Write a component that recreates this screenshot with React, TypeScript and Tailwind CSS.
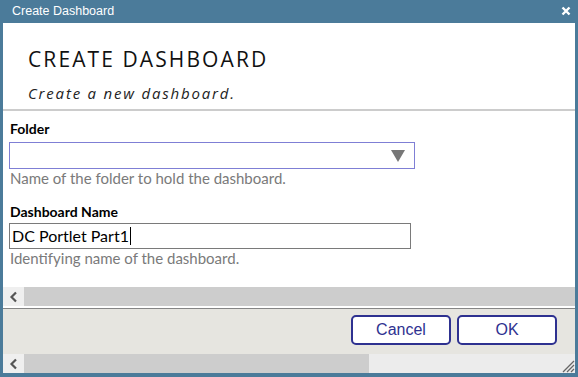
import React from "react";

function Chevron() {
  return (
    <svg width="10" height="12" viewBox="0 0 10 12">
      <path d="M7 1.5 L2.5 6 L7 10.5" fill="none" stroke="#555" strokeWidth="2.2" />
    </svg>
  );
}

function ScrollBar({ thumb }: { thumb?: number }) {
  return (
    <div className="flex h-[19px] bg-[#ececec]">
      <div className="w-[21px] flex items-center justify-center bg-[#efefef]">
        <Chevron />
      </div>
      {thumb ? (
        <div className="bg-[#cdcdcd]" style={{ width: thumb }} />
      ) : (
        <div className="flex-1 bg-[#cdcdcd]" />
      )}
      {thumb ? (
        <div className="flex-1 flex items-end justify-end">
          <svg width="14" height="14" viewBox="0 0 14 14">
            <path d="M13 2 L2 13 M13 6 L6 13 M13 10 L10 13" stroke="#666" strokeWidth="1.3" />
          </svg>
        </div>
      ) : null}
    </div>
  );
}

export default function App() {
  return (
    <div className="w-[578px] h-[377px] bg-[#4b7b9a] flex flex-col px-[3px] pb-[4px] overflow-hidden">
      {/* barra de título */}
      <div className="h-[23px] flex items-center justify-between pl-[9px] pr-[4px]">
        <span className="text-white text-[12.5px] font-['Liberation_Sans',sans-serif]">Create Dashboard</span>
        <svg width="10" height="10" viewBox="0 0 10 10" className="mb-[1px]">
          <path d="M1.5 1.5 L8.5 8.5 M8.5 1.5 L1.5 8.5" stroke="#fff" strokeWidth="2.4" />
        </svg>
      </div>

      <div className="flex-1 bg-white flex flex-col">
        {/* cabeçalho */}
        <div className="h-[88px] shrink-0 pl-[25px] pt-[23px] border-b-2 border-[#cccccc]">
          <h1 className="text-[21px] leading-[26px] font-medium tracking-[0.1em] text-[#111] font-['Open_Sans',sans-serif]">
            CREATE DASHBOARD
          </h1>
          <p className="mt-[11px] text-[15px] leading-[20px] italic tracking-[0.12em] text-[#222] font-['Open_Sans',sans-serif]">
            Create a new dashboard.
          </p>
        </div>

        {/* formulário */}
        <div className="flex-1 pl-[6px] pt-[10px] font-['Lato',sans-serif]">
          <label className="block text-[14px] leading-[16px] font-bold text-black pl-[1px]">Folder</label>
          <div className="mt-[5px] w-[406px] h-[27px] border border-[#7f7fd5] flex items-center justify-end pr-[9px]">
            <svg width="14" height="12" viewBox="0 0 14 12">
              <path d="M0 0 H14 L7 12 Z" fill="#777" />
            </svg>
          </div>
          <p className="text-[15px] leading-[19px] text-[#7a7a7a] pl-[1px]">Name of the folder to hold the dashboard.</p>

          <label className="block mt-[16px] text-[14px] leading-[16px] font-bold text-black pl-[1px]">
            Dashboard Name
          </label>
          <div className="mt-[3px] w-[402px] h-[26px] border border-[#7a7a7a] flex items-center pl-[2px]">
            <span className="text-[16px] leading-[20px] text-black">DC Portlet Part1</span>
            <span className="w-[1px] h-[18px] bg-black ml-[1px]" />
          </div>
          <p className="text-[15px] leading-[19px] text-[#7a7a7a] pl-[1px]">Identifying name of the dashboard.</p>
        </div>

        <ScrollBar />
        <div className="h-[2px] bg-white" />
        <div className="h-[1px] bg-[#858585]" />

        {/* rodapé com botões */}
        <div className="h-[45px] bg-[#e6e5e0] flex items-start justify-end gap-[6px] pt-[6px] pr-[18px]">
          <button className="w-[100px] h-[30px] rounded-[5px] border-2 border-[#2e3190] bg-white text-[#2e3190] text-[16px] font-['Liberation_Sans',sans-serif]">
            Cancel
          </button>
          <button className="w-[100px] h-[30px] rounded-[5px] border-2 border-[#2e3190] bg-white text-[#2e3190] text-[16px] font-['Liberation_Sans',sans-serif]">
            OK
          </button>
        </div>

        <ScrollBar thumb={345} />
      </div>
    </div>
  );
}
